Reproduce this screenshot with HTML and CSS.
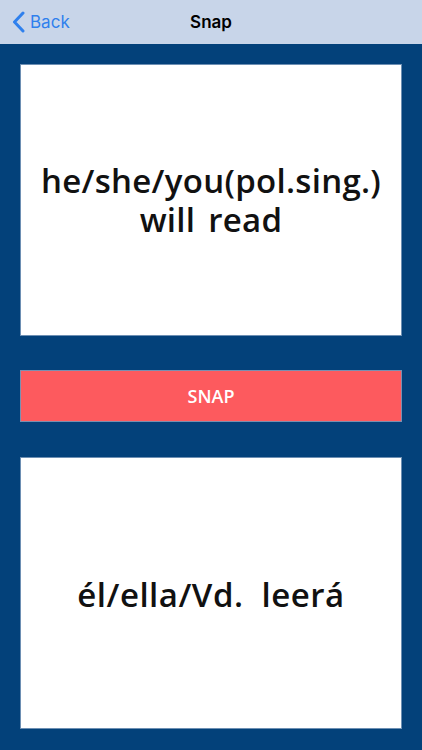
FILE: index.html
```html
<!DOCTYPE html>
<html>
<head>
<meta charset="utf-8">
<link rel="stylesheet" href="styles.css">
</head>
<body>
<div class="nav">
  <div class="back">
    <svg class="chev" width="13" height="22" viewBox="0 0 13 22"><path d="M11 2 L2.5 11 L11 20" fill="none" stroke="#2f80ed" stroke-width="3" stroke-linecap="round" stroke-linejoin="round"/></svg>
    <span>Back</span>
  </div>
  <div class="title">Snap</div>
</div>
<div class="main">
  <div class="card"><div class="word"><div class="line">he/she/you(pol.sing.)</div><div class="line">will read</div></div></div>
  <div class="snap">SNAP</div>
  <div class="card"><div class="word wide">él/ella/Vd. leerá</div></div>
</div>
</body>
</html>
```
FILE: styles.css
```css
html, body { margin: 0; padding: 0; }
body { width: 422px; height: 750px; background: #03417a; font-family: "Open Sans", "Noto Sans", sans-serif; overflow: hidden; }
.nav { height: 44px; background: #c8d5e9; position: relative; display: flex; align-items: center; justify-content: center; }
.back { position: absolute; left: 12px; top: 0; height: 44px; display: flex; align-items: center; gap: 5px; color: #2f80ed; font-family: "Inter", "Liberation Sans", sans-serif; font-size: 17px; }
.chev { display: block; }
.title { font-family: "Inter", "Liberation Sans", sans-serif; font-weight: 600; font-size: 17px; color: #000; }
.main { padding: 21px 21px 0 21px; display: flex; flex-direction: column; }
.card { height: 270px; background: #fff; box-shadow: 0 0 0 1px #6d8fb3; display: flex; align-items: center; justify-content: center; text-align: center; }
.word { font-family: "Open Sans", sans-serif; font-weight: 600; font-size: 33px; line-height: 39px; color: #111; letter-spacing: 0.3px; word-spacing: 4px; }
.word.wide { word-spacing: 9px; letter-spacing: 0.5px; margin-top: 2px; }
.line { line-height: 39px; }
.snap { margin: 36px 0 37px; height: 50px; background: #fd5a5e; box-shadow: 0 0 0 1px #7a8fb0; color: #fff; display: flex; align-items: center; justify-content: center; font-weight: 600; font-size: 18px; }
```
